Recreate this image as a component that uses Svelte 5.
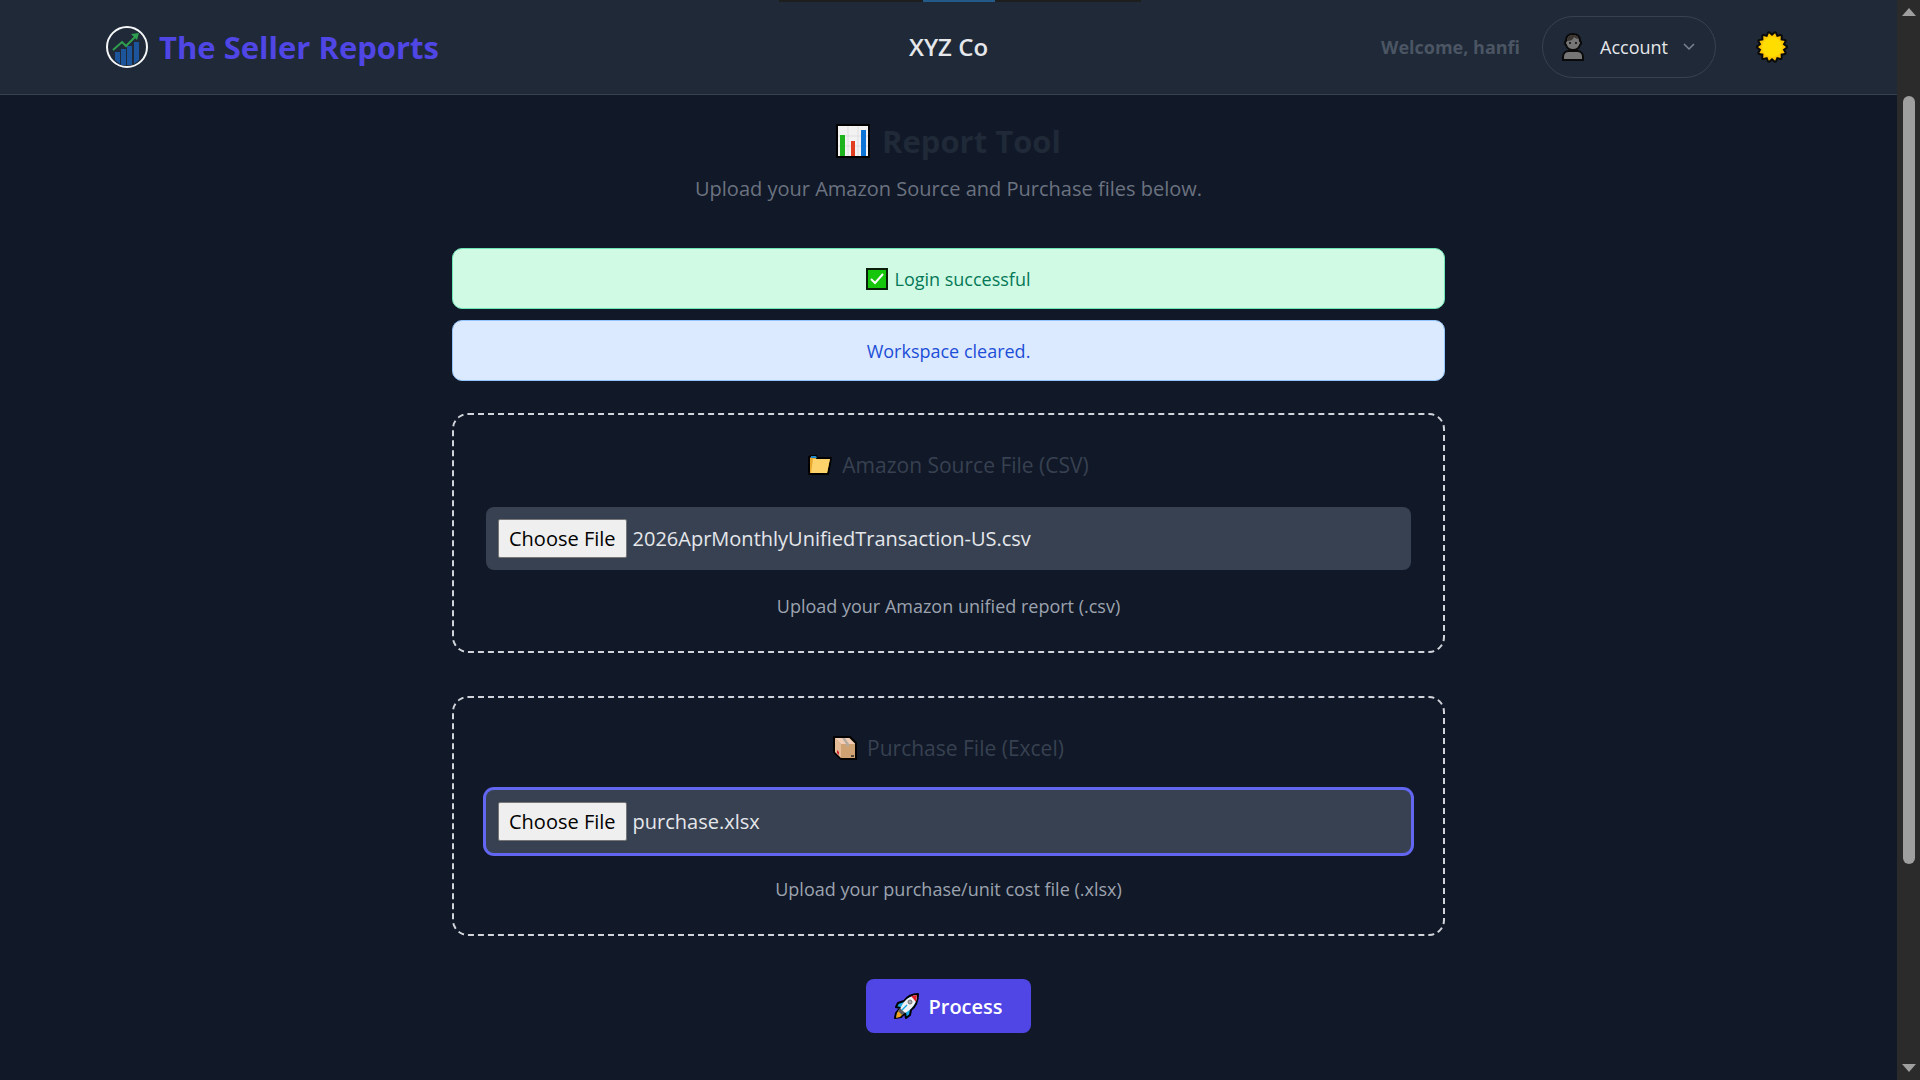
<script lang="ts">
  import { onMount } from 'svelte';

  type Slot = {
    id: string;
    icon: 'folder' | 'box';
    title: string;
    hint: string;
    accept: string;
    fileName: string;
  };

  const company = 'XYZ Co';
  const username = 'hanfi';

  const slots: Slot[] = [
    {
      id: 'source-file',
      icon: 'folder',
      title: 'Amazon Source File (CSV)',
      hint: 'Upload your Amazon unified report (.csv)',
      accept: '.csv',
      fileName: '2026AprMonthlyUnifiedTransaction-US.csv'
    },
    {
      id: 'purchase-file',
      icon: 'box',
      title: 'Purchase File (Excel)',
      hint: 'Upload your purchase/unit cost file (.xlsx)',
      accept: '.xlsx',
      fileName: 'purchase.xlsx'
    }
  ];

  // 14 rays, outer and inner points alternate
  const sunPoints = Array.from({ length: 28 }, (_, i) => {
    const angle = ((i + 1) * Math.PI) / 14;
    const radius = i % 2 ? 11 : 14;
    return `${16 + radius * Math.sin(angle)},${16 - radius * Math.cos(angle)}`;
  }).join(' ');

  let inputs: HTMLInputElement[] = $state([]);

  onMount(() => {
    slots.forEach((slot, i) => {
      const transfer = new DataTransfer();
      transfer.items.add(new File([''], slot.fileName));
      inputs[i].files = transfer.files;
    });
    inputs[1].focus();
  });
</script>

<div class="shell">
  <div class="page">
    <header class="navbar">
      <a class="brand" href="#home">
        <svg class="brand-logo" viewBox="0 0 44 44" fill="none">
          <circle cx="22" cy="22" r="20" stroke="#F4F6F8" stroke-width="2"/>
          <path d="M10 27h5v12l-5-4zM16 24h5v16h-5zM22 21h5v19h-5zM29 17h5v18l-5 4z" fill="#1C559B"/>
          <path d="M8 25l9-8 4 4 9-9" stroke="#2F9E4F" stroke-width="2"/>
          <path d="M26 9l8-1-2 7z" fill="#2F9E4F"/>
        </svg>
        <span>The Seller Reports</span>
      </a>

      <div class="company">{company}</div>

      <div class="nav-right">
        <span class="welcome">Welcome, {username}</span>
        <button class="account" type="button">
          <svg class="avatar" viewBox="0 0 24 30" fill="#767676" stroke="#0A0A0A" stroke-width="2">
            <path d="M2 28v-3c0-4 3-6 6-6h8c3 0 6 2 6 6v3z"/>
            <path d="M12 2c5 0 7 3 7 7 2 1 1 3 0 4-1 3-3 5-7 5s-6-2-7-5c-1-1-2-3 0-4 0-4 2-7 7-7z"/>
            <path d="M6 9c0-4 3-6 6-6s5 2 6 4c-2 0-4-1-5-2-1 3-4 4-7 4z" fill="#3B3530" stroke="none"/>
            <path d="M9 10v2M15 10v2" stroke-width="1.5"/>
          </svg>
          <span>Account</span>
          <svg class="chevron" viewBox="0 0 12 8" fill="none">
            <path d="M1 1l5 5 5-5" stroke="#7B8493" stroke-width="1.5"/>
          </svg>
        </button>
        <button class="theme" type="button" aria-label="Toggle theme">
          <svg viewBox="0 0 32 32">
            <polygon points={sunPoints} fill="#FFC800" stroke="#0A0A0A" stroke-width="4" stroke-linejoin="round"/>
            <polygon points={sunPoints} fill="#FFC800"/>
            <circle cx="16" cy="16" r="10" fill="#FFDD00"/>
          </svg>
        </button>
      </div>
    </header>

    <main class="content">
      <h1 class="title">
        <svg viewBox="0 0 34 34">
          <path d="M0 0h34v34H0z" fill="#000"/>
          <path d="M2 2h30v30H2z" fill="#F2F2F2"/>
          <path d="M2 12h30M2 22h30M12 2v30M22 2v30" stroke="#DEDEDE"/>
          <path d="M4 11h5v21H4z" fill="#1DB31D"/>
          <path d="M15 17h4v15h-4z" fill="#E23D1F"/>
          <path d="M25 6h5v26h-5z" fill="#0C74D4"/>
        </svg>
        <span>Report Tool</span>
      </h1>
      <p class="subtitle">Upload your Amazon Source and Purchase files below.</p>

      <div class="alerts">
        <div class="alert success" role="status">
          <svg viewBox="0 0 22 22">
            <path d="M1 1h20v20H1z" fill="#16C60C" stroke="#0A1F0A" stroke-width="2"/>
            <path d="M5 11l4 4 8-9" fill="none" stroke="#fff" stroke-width="2"/>
          </svg>
          <span>Login successful</span>
        </div>
        <div class="alert info" role="status">Workspace cleared.</div>
      </div>

      <form class="upload-form">
        {#each slots as slot, i}
          <section class="drop-box">
            <label class="drop-title" for={slot.id}>
              {#if slot.icon === 'folder'}
                <svg viewBox="0 0 24 24">
                  <path d="M1 21V4l2-1h5l1 2h14l-3 16z" fill="#E8A92C" stroke="#000" stroke-width="2"/>
                  <path d="M5 6h17l-3 14H3z" fill="#FFD36B"/>
                  <path d="M3 3h5l1 2H3z" fill="#2188C9"/>
                </svg>
              {:else}
                <svg viewBox="0 0 24 24">
                  <path d="M1 1h16l6 6v16H8l-7-7z" fill="#CFA273" stroke="#000" stroke-width="2"/>
                  <path d="M2 2h14l6 6H8z" fill="#F0CDB4"/>
                  <path d="M2 2l6 6v14l-6-6z" fill="#E4BB97"/>
                  <path d="M9 2h3l4 6v2h-3V8z" fill="#B5AAA0"/>
                  <path d="M4 14l2 2v3l-2-2z" fill="#D9202A"/>
                  <path d="M18 20h3" stroke="#5E4B3A" stroke-width="2"/>
                </svg>
              {/if}
              <span>{slot.title}</span>
            </label>
            <input
              bind:this={inputs[i]}
              id={slot.id}
              class="file-input"
              type="file"
              accept={slot.accept}
            />
            <p class="hint">{slot.hint}</p>
          </section>
        {/each}

        <button class="process" type="button">
          <svg viewBox="0 0 26 26">
            <path d="M10 8L4 10l-2 4 4 1-4 5-1 5 6-1 4-4 1 5 4-3 1-5c4-3 7-9 7-16-7 0-11 3-14 7z" fill="#19A9E5" stroke="#000" stroke-width="2" stroke-linejoin="round"/>
            <path d="M6 16C9 9 14 3 23 2c0 8-5 14-12 18z" fill="#F1F1F3"/>
            <path d="M17 3l6-1-1 7z" fill="#E0202E"/>
            <path d="M5 17l4 4-3 3-4 1 1-5z" fill="#F7A21B"/>
            <path d="M6 15l5 5-3 2-4-4z" fill="#5C5C64"/>
            <circle cx="16" cy="9" r="2" fill="#A9ABB2" stroke="#6F7178"/>
            <path d="M8 17l5-5" stroke="#19A9E5" stroke-width="1.5"/>
          </svg>
          <span>Process</span>
        </button>
      </form>
    </main>
  </div>

  <div class="scrollbar" aria-hidden="true">
    <svg viewBox="0 0 14 8"><path d="M0 8L7 0l7 8z" fill="#9F9F9F"/></svg>
    <div class="track"><div class="thumb"></div></div>
    <svg viewBox="0 0 14 8"><path d="M0 0h14L7 8z" fill="#9F9F9F"/></svg>
  </div>

  <!-- Edge of the window switcher above the page -->
  <div class="top-edge" aria-hidden="true"><span></span></div>
</div>

<style>
  :global(body) {
    background: #111827;
  }
  .shell {
    position: relative;
    display: grid;
    grid-template-columns: minmax(0, 1fr) 23px;
    height: 100vh;
    overflow: hidden;
    background: #111827;
    color: #E5E7EB;
    font-family: 'Segoe UI', 'Open Sans', sans-serif;
    font-size: 18px;
  }
  svg {
    display: block;
    flex-shrink: 0;
  }
  button,
  input {
    font-family: inherit;
  }
  button {
    cursor: pointer;
  }

  /* Navbar */
  .navbar {
    display: grid;
    grid-template-columns: 1fr auto 1fr;
    align-items: center;
    height: 94px;
    padding: 0 105px;
    background: #1F2937;
    border-bottom: 1px solid #374151;
  }
  .brand {
    display: flex;
    align-items: center;
    gap: 10px;
    color: #4F46E5;
    font-size: 31px;
    font-weight: 700;
    text-decoration: none;
  }
  .brand-logo {
    width: 44px;
    height: 44px;
  }
  .company {
    font-size: 24px;
    line-height: 30px;
    font-weight: 600;
  }
  .nav-right {
    display: flex;
    align-items: center;
    justify-content: flex-end;
    gap: 22px;
  }
  .welcome {
    color: #4B5563;
    font-weight: 700;
  }
  .account {
    display: flex;
    align-items: center;
    gap: 15px;
    height: 62px;
    padding: 0 20px 0 18px;
    border: 1px solid #374151;
    border-radius: 31px;
    background: transparent;
    color: #E5E7EB;
    font-size: 18px;
    font-weight: 500;
  }
  .avatar {
    width: 24px;
    height: 30px;
  }
  .chevron {
    width: 12px;
    height: 8px;
  }
  .theme {
    padding: 0 4px 0 18px;
    border: 0;
    background: transparent;
  }
  .theme svg {
    width: 32px;
    height: 32px;
  }

  /* Content */
  .content {
    display: flex;
    flex-direction: column;
    max-width: 993px;
    margin: 0 auto;
    padding: 24px 0;
    text-align: center;
  }
  .title {
    display: flex;
    align-items: center;
    justify-content: center;
    gap: 12px;
    margin: 0;
    color: #1F2937;
    font-size: 31px;
    line-height: 44px;
    font-weight: 700;
  }
  .title svg {
    width: 34px;
    height: 34px;
  }
  .subtitle {
    margin: 8px 0 0;
    color: #6B7280;
    font-size: 20px;
    line-height: 36px;
  }

  /* Alerts */
  .alerts {
    display: flex;
    flex-direction: column;
    gap: 11px;
    margin-top: 41px;
  }
  .alert {
    display: flex;
    align-items: center;
    justify-content: center;
    gap: 6px;
    height: 59px;
    border: 1px solid;
    border-radius: 10px;
  }
  .alert svg {
    width: 22px;
    height: 22px;
  }
  .success {
    background: #D1FAE5;
    border-color: #6EE7B7;
    color: #047857;
  }
  .info {
    background: #DBEAFE;
    border-color: #93C5FD;
    color: #1D4ED8;
  }

  /* Upload form */
  .upload-form {
    display: flex;
    flex-direction: column;
    align-items: center;
    gap: 43px;
    margin-top: 32px;
  }
  .drop-box {
    box-sizing: border-box;
    width: 100%;
    padding: 32px;
    border: 2px dashed #D1D5DB;
    border-radius: 16px;
  }
  .drop-title {
    display: flex;
    align-items: center;
    justify-content: center;
    gap: 10px;
    color: #374151;
    font-size: 21px;
    line-height: 36px;
    font-weight: 500;
  }
  .drop-title svg {
    width: 24px;
    height: 24px;
  }
  .file-input {
    display: block;
    box-sizing: border-box;
    width: 100%;
    height: 63px;
    margin: 24px 0;
    padding: 12px;
    border: 0;
    border-radius: 8px;
    outline: none;
    background: #374151;
    color: #E5E7EB;
    font-size: 20px;
  }
  .file-input:focus {
    box-shadow: 0 0 0 3px #6366F1;
  }
  .file-input::file-selector-button {
    height: 39px;
    margin-right: 6px;
    padding: 0 10px;
    border: 1px solid #767676;
    border-radius: 2px;
    background: #EFEFEF;
    color: #000;
    font-family: inherit;
    font-size: 20px;
  }
  .hint {
    margin: 0;
    color: #9CA3AF;
    line-height: 25px;
  }
  .process {
    display: flex;
    align-items: center;
    gap: 8px;
    height: 54px;
    padding: 0 28px;
    border: 0;
    border-radius: 8px;
    background: #4F46E5;
    color: #fff;
    font-size: 20px;
    font-weight: 600;
  }
  .process svg {
    width: 26px;
    height: 26px;
  }

  /* Scrollbar */
  .scrollbar {
    display: flex;
    flex-direction: column;
    align-items: center;
    gap: 8px;
    padding: 8px 0;
    background: #2B2B2B;
  }
  .scrollbar svg {
    width: 14px;
    height: 8px;
  }
  .track {
    flex: 1;
    padding-top: 72px;
  }
  .thumb {
    width: 12px;
    height: 80%;
    border-radius: 6px;
    background: #9F9F9F;
  }

  .top-edge {
    position: absolute;
    top: 0;
    left: 779px;
    width: 362px;
    height: 2px;
    background: #1E1E1E;
  }
  .top-edge span {
    display: block;
    width: 72px;
    height: 2px;
    margin-left: 144px;
    background: #235A87;
  }
</style>
